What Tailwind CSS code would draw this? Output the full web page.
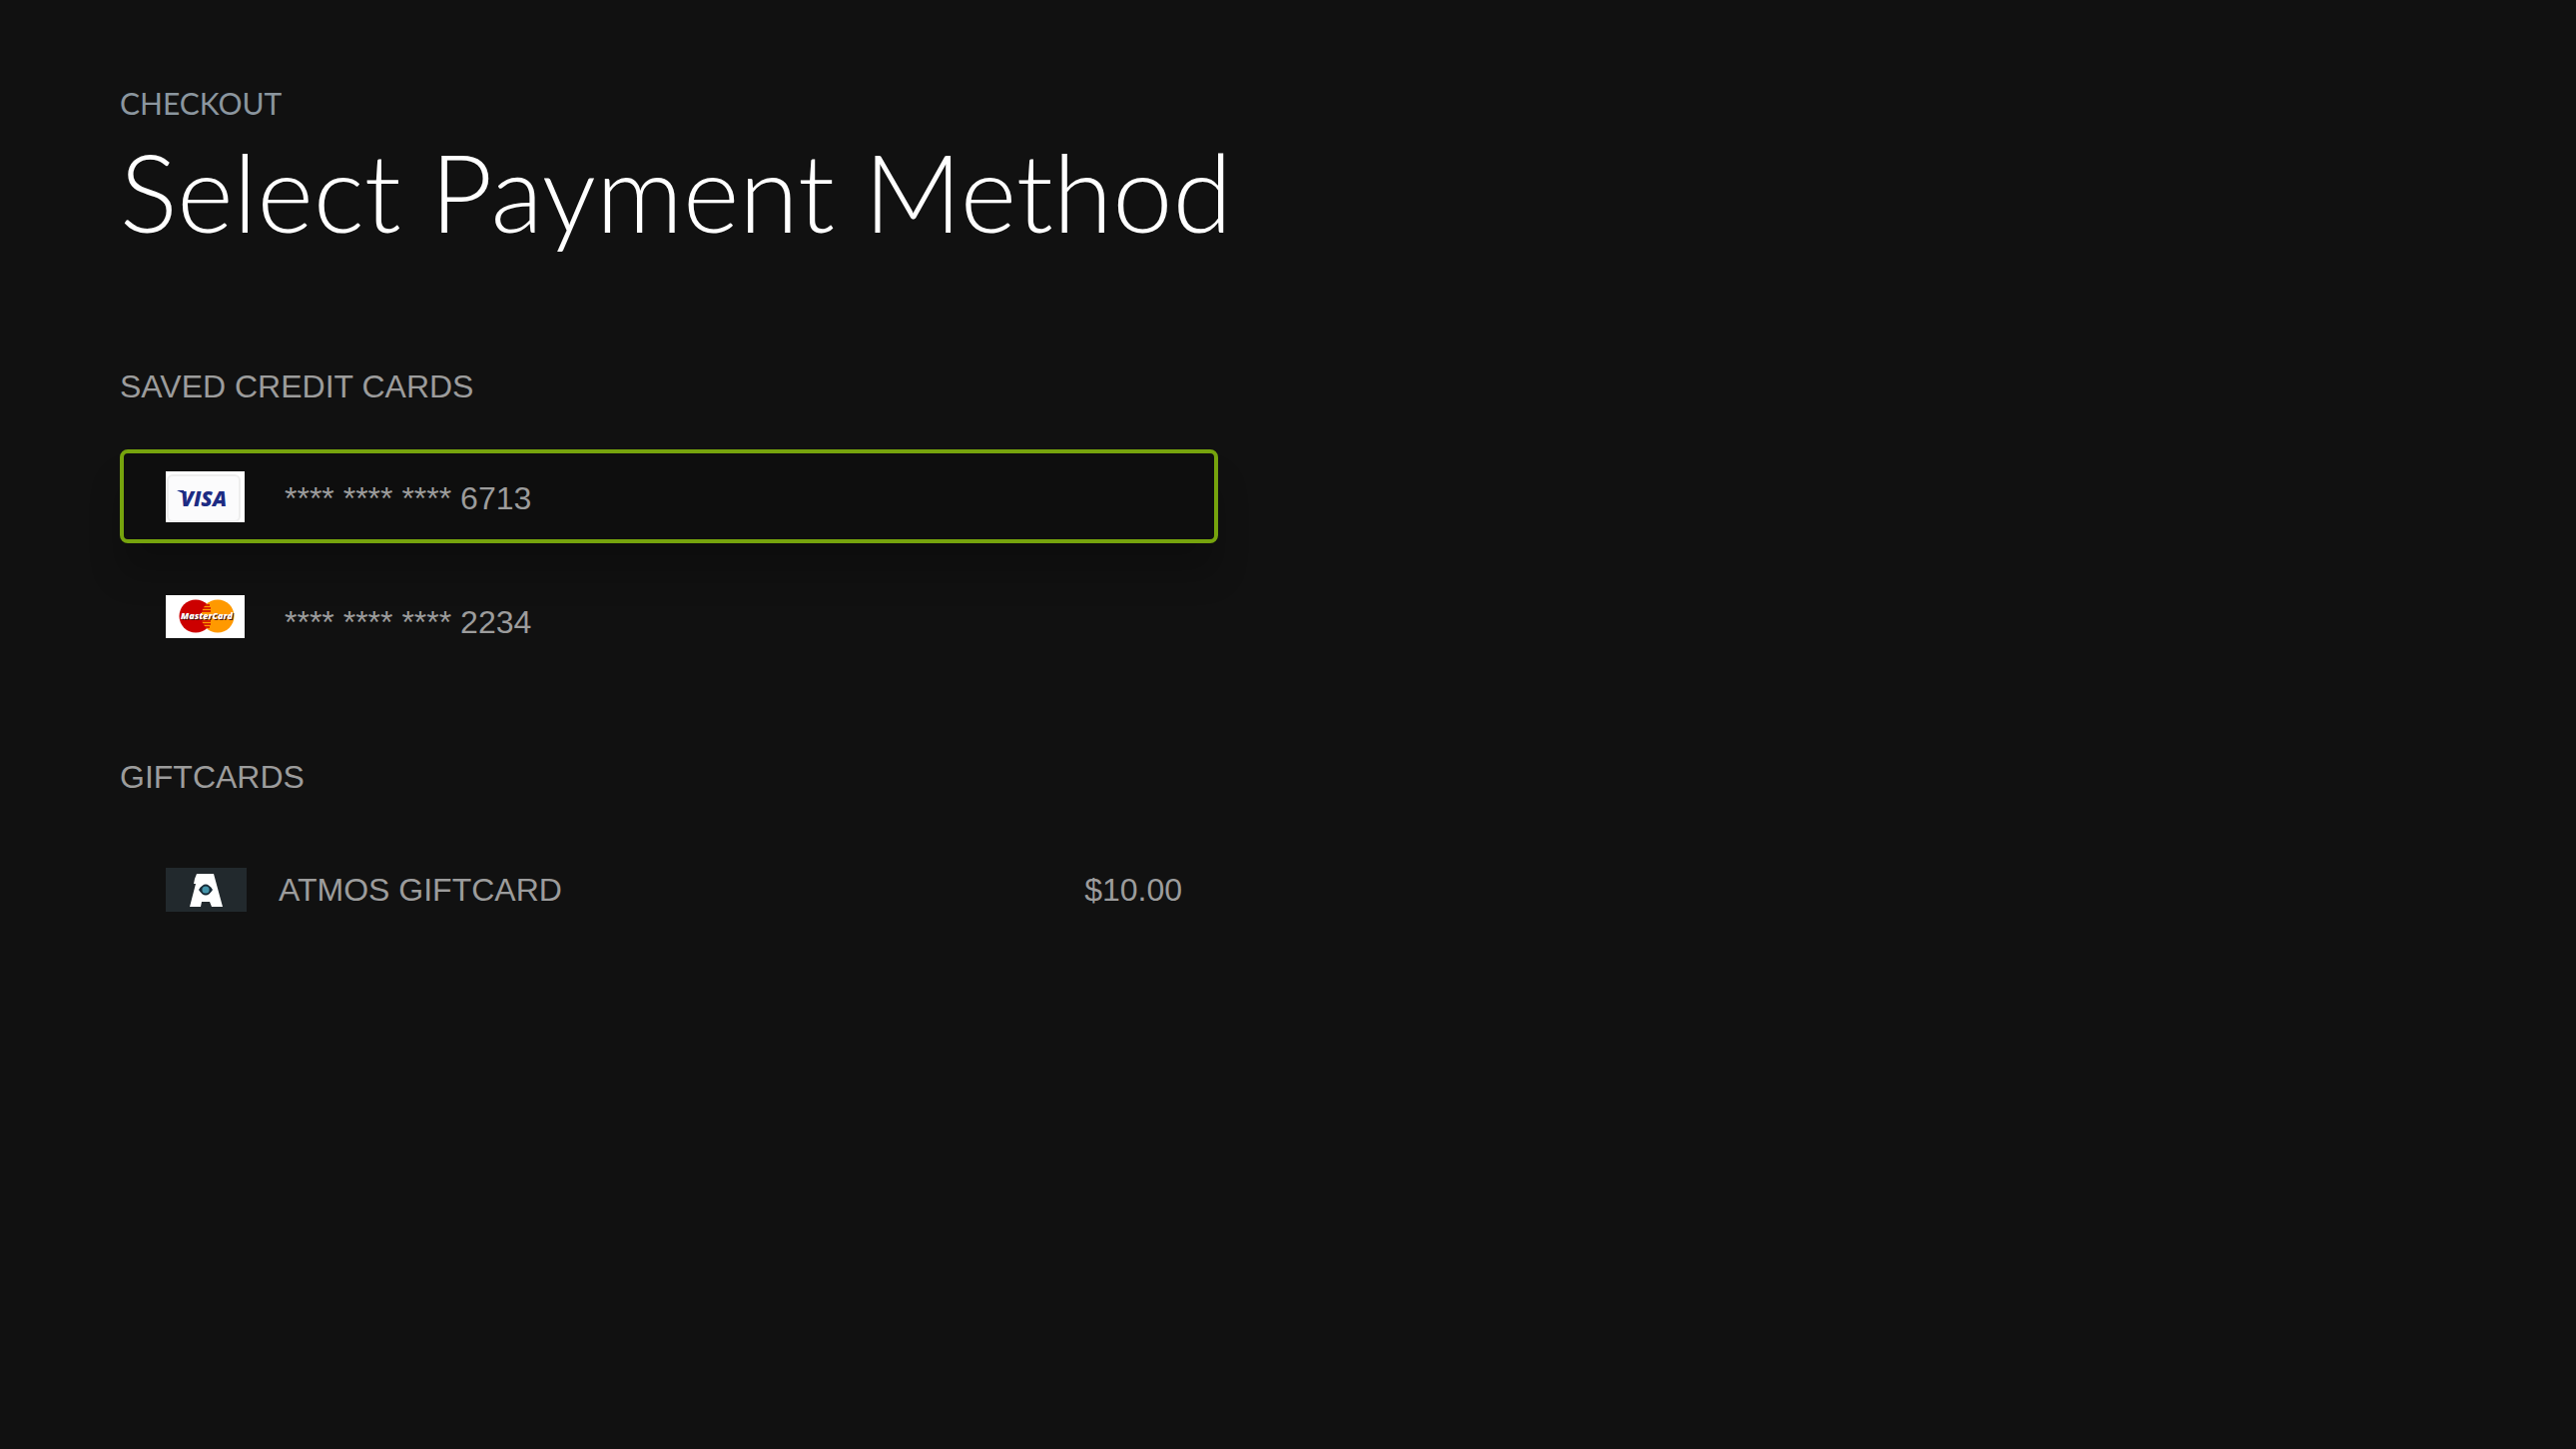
<!DOCTYPE html>
<html lang="en">
<head>
<meta charset="utf-8">
<meta name="viewport" content="width=device-width, initial-scale=1">
<title>Checkout</title>
<script src="https://cdn.jsdelivr.net/npm/@tailwindcss/browser@4"></script>
</head>
<body class="min-h-screen bg-[#111111] font-['Liberation_Sans',Arial,sans-serif] text-[32px] leading-10 text-[#9c9c9c]">
<main class="w-full max-w-[1340px] px-[120px] pt-[83px] pb-20">
  <header class="font-[Lato,sans-serif]">
    <p class="text-[30px] leading-10 text-[#8b969f]">CHECKOUT</p>
    <h1 class="text-[108px] leading-[136px] font-light whitespace-nowrap text-white">Select Payment Method</h1>
  </header>

  <section class="mt-[108px]" aria-labelledby="cards">
    <h2 id="cards">SAVED CREDIT CARDS</h2>
    <div class="mt-[43px] flex flex-col gap-[30px]">
      <button type="button" class="flex h-[94px] w-full items-center gap-10 rounded-lg border-4 border-[#76a30d] px-[42px] text-left shadow-[0_32px_32px_rgba(0,0,0,0.2)] bg-[#0e0e0e]">
        <svg class="h-[51px] w-[79px] shrink-0" viewBox="0 0 79 51" role="img" aria-label="Visa">
          <rect width="79" height="51" fill="#fff"/>
          <rect x="2" y="4" width="72" height="46" rx="5" fill="#fbfbfc" stroke="#eeeeee" stroke-width="2"/>
          <text x="15" y="35" font-family="Open Sans" font-size="21" font-weight="800" font-style="italic" fill="#1d2b83">VISA</text>
          <path d="M11 19h7l3 9-4-6z" fill="#1d2b83"/>
        </svg>
        <span class="pt-1">**** **** **** 6713</span>
      </button>
      <button type="button" class="flex h-[94px] w-full items-center gap-10 rounded-lg border-4 border-transparent px-[42px] text-left">
        <svg class="h-[51px] w-[79px] shrink-0" viewBox="0 0 79 51" role="img" aria-label="MasterCard">
          <rect width="79" height="43" fill="#fff"/>
          <circle cx="30" cy="21" r="16.5" fill="#cc0000"/>
          <circle cx="52" cy="21" r="16.5" fill="#ff9900"/>
          <path d="M38 10h6M37 13h8M36 16h9M36 26h9M37 29h8M38 32h6" stroke="#cc0000" stroke-width="1.5"/>
          <text x="16" y="25" font-family="Open Sans" font-size="9" font-weight="800" font-style="italic" fill="#4a1010">MasterCard</text>
          <text x="15" y="24" font-family="Open Sans" font-size="9" font-weight="800" font-style="italic" fill="#fff">MasterCard</text>
        </svg>
        <span class="pt-1">**** **** **** 2234</span>
      </button>
    </div>
  </section>

  <section class="mt-[90px]" aria-labelledby="gifts">
    <h2 id="gifts">GIFTCARDS</h2>
    <button type="button" class="mt-[46px] flex h-[94px] w-full items-center gap-8 rounded-lg border-4 border-transparent pr-8 pl-[42px] text-left">
      <svg class="h-11 w-[81px] shrink-0" viewBox="0 0 81 44" aria-hidden="true">
        <rect width="81" height="44" fill="#22292d"/>
        <path d="M31 6h17l9 33H46l-2-5h-8l-1 5H24l6-23h-2l1-5z" fill="#fff"/>
        <path d="M33 22q7-11 14 0q-7 11-14 0z" fill="#182a36"/>
        <circle cx="40" cy="22" r="3.600" fill="#4495ab"/>
      </svg>
      <span>ATMOS GIFTCARD</span>
      <span class="ml-auto">$10.00</span>
    </button>
  </section>
</main>
</body>
</html>
